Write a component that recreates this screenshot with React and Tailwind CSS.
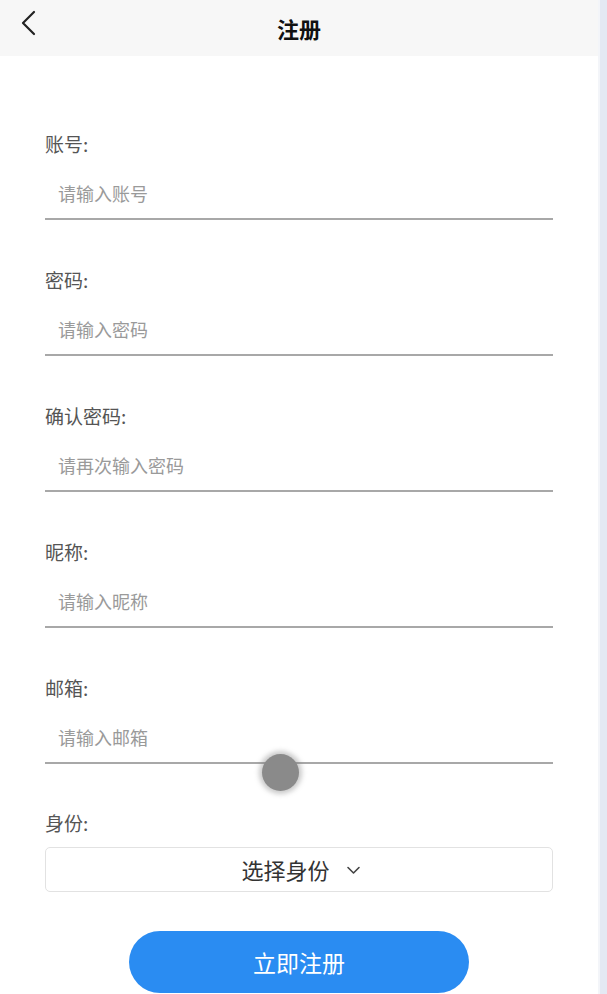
import { useState } from 'react';

const fields = [
  { label: '账号:', placeholder: '请输入账号', type: 'text' },
  { label: '密码:', placeholder: '请输入密码', type: 'password' },
  { label: '确认密码:', placeholder: '请再次输入密码', type: 'password' },
  { label: '昵称:', placeholder: '请输入昵称', type: 'text' },
  { label: '邮箱:', placeholder: '请输入邮箱', type: 'text' },
];

export default function App() {
  const [values, setValues] = useState({});

  return (
    <div
      className="flex h-[994px] w-[607px] overflow-hidden bg-white"
      style={{ fontFamily: '"Noto Sans CJK SC", "Noto Sans", sans-serif' }}
    >
      <div className="relative flex w-[598px] flex-col">
        <header className="relative flex h-14 items-center justify-center bg-[#f7f7f7]">
          <button className="absolute left-[16px] top-[6px] p-1 text-[#222]">
            <svg width="18" height="26" viewBox="0 0 18 26" fill="none">
              <path d="M14 2 L3 13 L14 24" stroke="currentColor" strokeWidth="2.2" strokeLinecap="round" strokeLinejoin="round" />
            </svg>
          </button>
          <h1 className="text-[22px] font-bold text-[#111]">注册</h1>
        </header>

        <form className="flex flex-col px-[45px] pt-[76px]" onSubmit={(e) => e.preventDefault()}>
          {fields.map((f, i) => (
            <div key={i} className="mb-[48px] flex flex-col">
              <label className="h-6 text-[19px] leading-6 text-[#555]">{f.label}</label>
              <input
                type={f.type}
                value={values[i] || ''}
                onChange={(e) => setValues({ ...values, [i]: e.target.value })}
                placeholder={f.placeholder}
                className="mt-3 h-[52px] border-b-2 border-[#a8a8a8] bg-transparent pl-[13px] text-[18px] text-[#333] outline-none placeholder:text-[#9a9a9a]"
              />
            </div>
          ))}

          <div className="-mt-[1px] flex flex-col">
            <label className="h-6 text-[19px] leading-6 text-[#555]">身份:</label>
            <button
              type="button"
              className="mt-3 flex h-[45px] items-center justify-center gap-[16px] rounded-[5px] border border-[#e2e2e2] bg-white pl-[4px] text-[22px] text-[#333]"
            >
              <span>选择身份</span>
              <svg width="15" height="10" viewBox="0 0 15 10" fill="none">
                <path d="M2 2.5 L7.5 8 L13 2.5" stroke="#444" strokeWidth="1.6" strokeLinecap="round" strokeLinejoin="round" />
              </svg>
            </button>
          </div>

          <div className="mt-[39px] flex justify-center">
            <button
              type="submit"
              className="h-[62px] w-[340px] rounded-full bg-[#2a8cf2] text-[23px] text-white"
            >
              立即注册
            </button>
          </div>
        </form>

        <div className="pointer-events-none absolute left-[262px] top-[754px] h-[37px] w-[37px] rounded-full bg-[#8a8a8a] shadow-[0_0_5px_3px_rgba(120,120,120,0.4)]" />
      </div>
      <div className="w-[9px] border-l-2 border-[#f3f5f9] bg-[#e4e9f3]" />
    </div>
  );
}
